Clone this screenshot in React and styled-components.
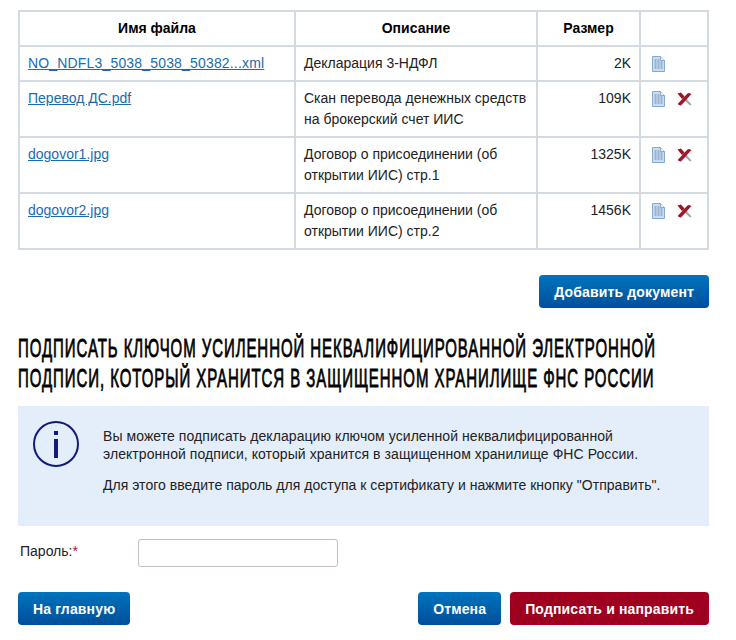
import styled, { createGlobalStyle } from "styled-components";

const GlobalStyle = createGlobalStyle`
  html, body {
    margin: 0;
    padding: 0;
    background: #fff;
  }
  body {
    font-family: "Liberation Sans", Arial, sans-serif;
    font-size: 14px;
    color: #222;
  }
`;

const Page = styled.div`
  width: 691px;
  padding: 10px 0 0 18px;
`;

const FileTable = styled.table`
  width: 691px;
  border-collapse: collapse;
  table-layout: fixed;
  border: 2px solid #d3dae1;
  line-height: 21px;
`;

const HeadCell = styled.th`
  border: 2px solid #d3dae1;
  padding: 6px 8px;
  height: 21px;
  font-weight: bold;
  color: #000;
  text-align: center;
`;

const Cell = styled.td`
  border: 2px solid #d3dae1;
  padding: ${(p) => (p.$right ? "6px 8px 6px 8px" : "6px 8px")};
  vertical-align: top;
  text-align: ${(p) => (p.$right ? "right" : "left")};
`;

const FileLink = styled.a`
  color: #1a6bb0;
  text-decoration: underline;
  letter-spacing: ${(p) => (p.$wide ? "0.17px" : "0")};
`;

const Actions = styled.div`
  display: flex;
  align-items: center;
  gap: 12px;
  padding: 3px 0 0 3px;
`;

const ButtonRow = styled.div`
  display: flex;
  justify-content: ${(p) => p.$justify || "flex-end"};
  margin-top: ${(p) => p.$top || 0}px;
`;

const ButtonGroup = styled.div`
  display: flex;
  gap: 9px;
`;

const Button = styled.button`
  height: 33px;
  padding: 0 15px;
  border: 0;
  border-radius: 4px;
  font-family: "Liberation Sans", Arial, sans-serif;
  font-size: 14px;
  font-weight: bold;
  letter-spacing: 0.15px;
  color: #fff;
  background: ${(p) =>
    p.$danger ? "#a00020" : "linear-gradient(#0074bd, #004f9a)"};
`;

const Heading = styled.h2`
  margin: 25px 0 0;
  width: 691px;
  font-family: "Liberation Sans", sans-serif;
  font-size: 25px;
  line-height: 30px;
  font-weight: normal;
  letter-spacing: 1.55px;
  color: #000;
  white-space: nowrap;
  -webkit-text-stroke: 0.8px #000;
  text-transform: uppercase;
  transform: scaleX(0.6);
  transform-origin: left top;
`;

const InfoBox = styled.div`
  display: flex;
  height: 120px;
  box-sizing: border-box;
  margin-top: 13px;
  padding: 14px 0 0 14px;
  background: #e4eefa;
`;

const InfoText = styled.div`
  margin-left: 23px;
  padding-top: 7px;
  font-size: 14px;
  line-height: 18px;
  letter-spacing: 0.07px;
  color: #222;

  p {
    margin: 0 0 13px;
  }
  p + p {
    letter-spacing: 0.03px;
  }
`;

const FormRow = styled.div`
  display: flex;
  align-items: center;
  margin-top: 13px;
`;

const Label = styled.label`
  width: 118px;
  margin-left: 2px;
  padding-bottom: 4px;
  font-size: 14px;
  color: #222;

  span {
    color: #b01030;
  }
`;

const TextInput = styled.input`
  width: 200px;
  height: 28px;
  box-sizing: border-box;
  border: 1px solid #c4bcc0;
  border-radius: 3px;
  background: #fff;
`;

const DocIcon = () => (
  <svg width="13" height="16" viewBox="0 0 13 16">
    <path d="M.5.5h8l4 4v11H.5z" fill="#cadcf0" stroke="#86a9d0" />
    <path d="M8.5.5v4h4" fill="#eef5fb" stroke="#86a9d0" />
    <path
      d="M2.5 4h5M2.5 6h8M2.5 8h8M2.5 10h8M2.5 12h8"
      stroke="#6f8fb3"
      strokeWidth="1"
      strokeDasharray="2 1"
    />
  </svg>
);

const DeleteIcon = () => (
  <svg width="15" height="14" viewBox="0 0 15 14">
    <path d="M4 5l2-2 8.5 9.5-1.5 1z" fill="#a8a0a6" />
    <path d="M.5 1.5L4 .5 7.5 4.5 5 7z" fill="#9c1426" />
    <path d="M1 11.5L10.5 1.5l1.5-.5 2.5 1L4 13.5l-2.5-.5z" fill="#a5162a" />
  </svg>
);

const files = [
  { name: "NO_NDFL3_5038_5038_50382...xml", desc: ["Декларация 3-НДФЛ"], size: "2K", wide: true },
  { name: "Перевод ДС.pdf", desc: ["Скан перевода денежных средств", "на брокерский счет ИИС"], size: "109K", del: true },
  { name: "dogovor1.jpg", desc: ["Договор о присоединении (об", "открытии ИИС) стр.1"], size: "1325K", del: true },
  { name: "dogovor2.jpg", desc: ["Договор о присоединении (об", "открытии ИИС) стр.2"], size: "1456K", del: true },
];

export default function App() {
  return (
    <Page>
      <GlobalStyle />
      <FileTable>
        <colgroup>
          <col style={{ width: 276 }} />
          <col style={{ width: 242 }} />
          <col style={{ width: 103 }} />
          <col />
        </colgroup>
        <thead>
          <tr>
            <HeadCell>Имя файла</HeadCell>
            <HeadCell>Описание</HeadCell>
            <HeadCell>Размер</HeadCell>
            <HeadCell />
          </tr>
        </thead>
        <tbody>
          {files.map((f) => (
            <tr key={f.name}>
              <Cell>
                <FileLink href="#" $wide={f.wide}>
                  {f.name}
                </FileLink>
              </Cell>
              <Cell>
                {f.desc.map((line) => (
                  <div key={line}>{line}</div>
                ))}
              </Cell>
              <Cell $right>{f.size}</Cell>
              <Cell>
                <Actions>
                  <DocIcon />
                  {f.del && <DeleteIcon />}
                </Actions>
              </Cell>
            </tr>
          ))}
        </tbody>
      </FileTable>

      <ButtonRow $top={25}>
        <Button>Добавить документ</Button>
      </ButtonRow>

      <Heading>
        Подписать ключом усиленной неквалифицированной электронной
        <br />
        подписи, который хранится в защищенном хранилище ФНС России
      </Heading>

      <InfoBox>
        <svg width="48" height="48" viewBox="0 0 48 48">
          <circle cx="24" cy="24" r="22" fill="none" stroke="#14197a" strokeWidth="2" />
          <rect x="22" y="11" width="4" height="4" fill="#14197a" />
          <rect x="22" y="19" width="4" height="19" fill="#14197a" />
        </svg>
        <InfoText>
          <p>
            Вы можете подписать декларацию ключом усиленной неквалифицированной
            <br />
            электронной подписи, который хранится в защищенном хранилище ФНС России.
          </p>
          <p>Для этого введите пароль для доступа к сертификату и нажмите кнопку "Отправить".</p>
        </InfoText>
      </InfoBox>

      <FormRow>
        <Label>
          Пароль:<span>*</span>
        </Label>
        <TextInput type="password" />
      </FormRow>

      <ButtonRow $justify="space-between" $top={25}>
        <Button>На главную</Button>
        <ButtonGroup>
          <Button>Отмена</Button>
          <Button $danger>Подписать и направить</Button>
        </ButtonGroup>
      </ButtonRow>
    </Page>
  );
}
